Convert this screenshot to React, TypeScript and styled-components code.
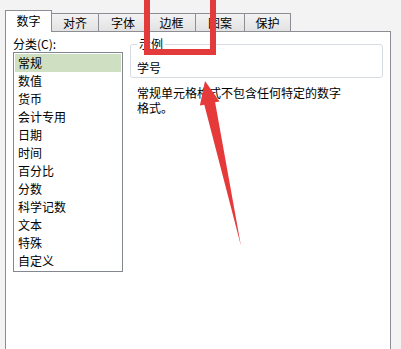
import React from 'react';
import styled, { createGlobalStyle } from 'styled-components';

const GlobalStyle = createGlobalStyle`
  body {
    margin: 0;
    background: #f2f2f2;
    font-family: "Noto Sans CJK SC", "Noto Sans", sans-serif;
    color: #000;
  }
`;

const Screen = styled.div`
  position: relative;
  width: 401px;
  height: 349px;
  overflow: hidden;
  box-sizing: border-box;
  padding: 10px 0 0 5px;
  background: #f3f3f3;
  font-size: 12px;
`;

const TabRow = styled.div`
  display: flex;
  align-items: flex-end;
  height: 21px;
  position: relative;
  z-index: 2;
`;

const Tab = styled.div<{ $active?: boolean; $w: number }>`
  box-sizing: border-box;
  width: ${p => p.$w}px;
  height: ${p => (p.$active ? 22 : 18)}px;
  margin-bottom: ${p => (p.$active ? -1 : 0)}px;
  margin-left: -1px;
  border: 1px solid #8c8e94;
  border-bottom: none;
  background: ${p =>
    p.$active ? '#fff' : 'linear-gradient(#f3f3f3, #e2e2e2)'};
  display: flex;
  justify-content: center;
  align-items: ${p => (p.$active ? 'flex-start' : 'center')};
  padding-top: ${p => (p.$active ? 3 : 0)}px;
  line-height: 14px;

  &:first-child {
    margin-left: 0;
  }
`;

const Panel = styled.div`
  box-sizing: border-box;
  width: 386px;
  height: 330px;
  background: #fff;
  border: 1px solid #8c8e94;
  display: grid;
  grid-template-columns: 110px 253px;
  column-gap: 7px;
  align-items: start;
  padding: 4px 0 0 7px;
`;

const Column = styled.div<{ $top?: number }>`
  display: flex;
  flex-direction: column;
  padding-top: ${p => p.$top || 0}px;
`;

const Label = styled.div`
  line-height: 16px;
  font-size: 12px;
`;

const ListBox = styled.ul`
  list-style: none;
  margin: 0;
  box-sizing: border-box;
  width: 110px;
  height: 220px;
  border: 1px solid #828790;
  padding: 1px;
`;

const Item = styled.li<{ $selected?: boolean }>`
  height: 18px;
  line-height: 18px;
  padding-left: 3px;
  background: ${p => (p.$selected ? '#cfe0c2' : 'transparent')};
`;

const GroupBox = styled.fieldset`
  margin: 0;
  min-width: 0;
  box-sizing: border-box;
  width: 253px;
  padding: 0 6px 1px;
  border: 1px solid #d6dce2;
  border-radius: 3px;
`;

const Legend = styled.legend`
  padding: 0 2px;
  margin-left: 0;
  line-height: 14px;
`;

const Sample = styled.div`
  padding-top: 9px;
  line-height: 16px;
`;

const Description = styled.p`
  margin: 7px 0 0 7px;
  width: 212px;
  line-height: 15px;
`;

const Annotation = styled.svg`
  position: absolute;
  left: 0;
  top: 0;
  pointer-events: none;
  z-index: 5;
`;

const tabs: [string, number][] = [
  ['数字', 47],
  ['对齐', 48],
  ['字体', 50],
  ['边框', 49],
  ['图案', 50],
  ['保护', 47],
];

const categories = [
  '常规', '数值', '货币', '会计专用', '日期', '时间',
  '百分比', '分数', '科学记数', '文本', '特殊', '自定义',
];

export default function App() {
  return (
    <>
      <GlobalStyle />
      <Screen>
        <TabRow>
          {tabs.map(([name, w], i) => (
            <Tab key={name} $w={w} $active={i === 0}>{name}</Tab>
          ))}
        </TabRow>
        <Panel>
          <Column>
            <Label>分类(C):</Label>
            <ListBox>
              {categories.map((c, i) => (
                <Item key={c} $selected={i === 0}>{c}</Item>
              ))}
            </ListBox>
          </Column>
          <Column $top={1}>
            <GroupBox>
              <Legend>示例</Legend>
              <Sample>学号</Sample>
            </GroupBox>
            <Description>常规单元格格式不包含任何特定的数字格式。</Description>
          </Column>
        </Panel>
        <Annotation width="401" height="349" viewBox="0 0 401 349">
          <rect x="147" y="-10" width="66" height="62" fill="none" stroke="#e33b3b" strokeWidth="6" />
          <polygon
            points="205,81 219.5,101.4 215.1,102.3 241,246 204.3,104.7 199.9,105.6"
            fill="#e6393a"
          />
        </Annotation>
      </Screen>
    </>
  );
}
